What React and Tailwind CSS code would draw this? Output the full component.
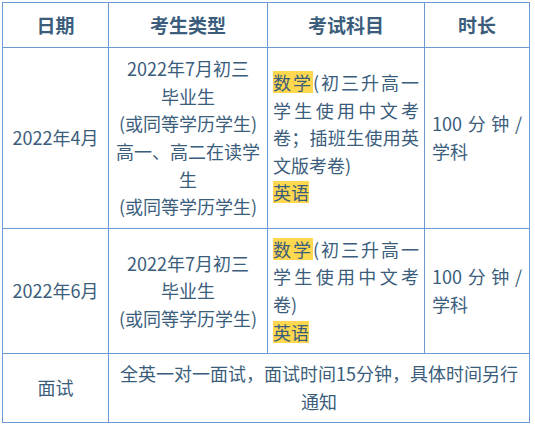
import React from "react";

const J = "text-justify [text-align-last:justify]";
const HL = "bg-[linear-gradient(#ffd84f,#ffd84f)] bg-no-repeat bg-[length:100%_22px] bg-center";

function Head({ children }) {
  return (
    <div className="bg-white flex items-center justify-center font-bold text-[19px]">
      {children}
    </div>
  );
}

function Center({ lines }) {
  return (
    <div className="bg-white flex flex-col items-center justify-center text-center">
      {lines.map((l, i) => (
        <div key={i}>{l}</div>
      ))}
    </div>
  );
}

function Subjects({ lines }) {
  return (
    <div className="bg-white flex flex-col justify-center pl-[5px] pr-[5px]">
      {lines.map((l, i) => (
        <div key={i} className={l.j ? J : ""}>
          {l.c}
        </div>
      ))}
    </div>
  );
}

function Duration() {
  return (
    <div className="bg-white flex flex-col justify-center pl-[7px] pr-[7px]">
      <div className={J}>100分钟/</div>
      <div>学科</div>
    </div>
  );
}

export default function App() {
  const first = (
    <>
      <span className={HL}>数学</span>(初三升高一
    </>
  );
  const eng = <span className={HL}>英语</span>;
  return (
    <div className="min-h-screen bg-white pl-[2px] pt-[2px] font-['Noto_Sans_CJK_SC','Noto_Sans',sans-serif]">
      <div className="grid w-[528px] grid-cols-[105px_158px_156px_104px] grid-rows-[44px_180px_124px_68px] gap-px bg-[#6b9bd2] p-px text-[18px] leading-[27.6px] text-[#3b5d7c]">
        <Head>日期</Head>
        <Head>考生类型</Head>
        <Head>考试科目</Head>
        <Head>时长</Head>

        <Center lines={["2022年4月"]} />
        <Center
          lines={[
            "2022年7月初三",
            "毕业生",
            "(或同等学历学生)",
            "高一、高二在读学",
            "生",
            "(或同等学历学生)",
          ]}
        />
        <Subjects
          lines={[
            { c: first, j: true },
            { c: "学生使用中文考", j: true },
            { c: "卷；插班生使用英", j: true },
            { c: "文版考卷)" },
            { c: eng },
          ]}
        />
        <Duration />

        <Center lines={["2022年6月"]} />
        <Center lines={["2022年7月初三", "毕业生", "(或同等学历学生)"]} />
        <Subjects
          lines={[
            { c: first, j: true },
            { c: "学生使用中文考", j: true },
            { c: "卷)" },
            { c: eng },
          ]}
        />
        <Duration />

        <Center lines={["面试"]} />
        <div className="col-span-3 bg-white flex flex-col items-center justify-center text-center">
          <div>全英一对一面试，面试时间15分钟，具体时间另行</div>
          <div>通知</div>
        </div>
      </div>
    </div>
  );
}
